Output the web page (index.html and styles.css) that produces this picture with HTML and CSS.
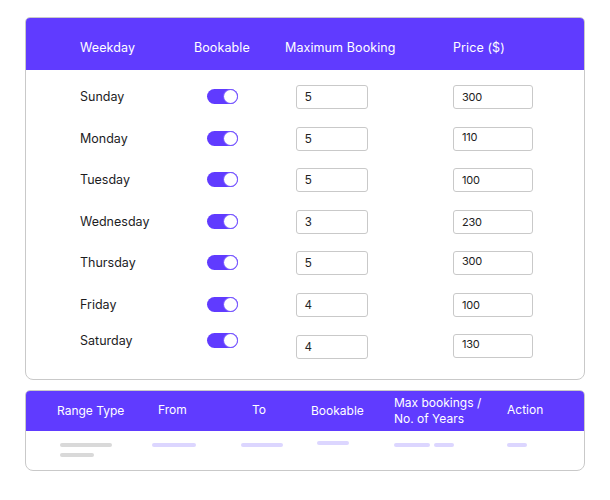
FILE: index.html
```html
<!DOCTYPE html>
<html>
<head>
<meta charset="utf-8">
<link rel="stylesheet" href="styles.css">
</head>
<body>
<div class="page">
  <section class="card week">
    <div class="week-head">
      <div class="c1">Weekday</div>
      <div class="c2">Bookable</div>
      <div class="c3">Maximum Booking</div>
      <div class="c4">Price ($)</div>
    </div>
    <div class="week-body">
      <div class="row"><div class="c1 day">Sunday</div><div class="c2"><span class="toggle"></span></div><div class="c3"><span class="inp max">5</span></div><div class="c4"><span class="inp price">300</span></div></div>
      <div class="row"><div class="c1 day">Monday</div><div class="c2"><span class="toggle"></span></div><div class="c3"><span class="inp max">5</span></div><div class="c4"><span class="inp price top">110</span></div></div>
      <div class="row"><div class="c1 day">Tuesday</div><div class="c2"><span class="toggle"></span></div><div class="c3"><span class="inp max">5</span></div><div class="c4"><span class="inp price">100</span></div></div>
      <div class="row"><div class="c1 day">Wednesday</div><div class="c2"><span class="toggle"></span></div><div class="c3"><span class="inp max">3</span></div><div class="c4"><span class="inp price">230</span></div></div>
      <div class="row"><div class="c1 day">Thursday</div><div class="c2"><span class="toggle"></span></div><div class="c3"><span class="inp max">5</span></div><div class="c4"><span class="inp price top">300</span></div></div>
      <div class="row"><div class="c1 day">Friday</div><div class="c2"><span class="toggle"></span></div><div class="c3"><span class="inp max">4</span></div><div class="c4"><span class="inp price">100</span></div></div>
      <div class="row last"><div class="c1 day up">Saturday</div><div class="c2 up"><span class="toggle"></span></div><div class="c3"><span class="inp max">4</span></div><div class="c4"><span class="inp price top">130</span></div></div>
    </div>
  </section>

  <section class="card range">
    <div class="range-head">
      <div class="r1">Range Type</div>
      <div class="r2">From</div>
      <div class="r3">To</div>
      <div class="r4">Bookable</div>
      <div class="r5">Max bookings /<br>No. of Years</div>
      <div class="r6">Action</div>
    </div>
    <div class="range-body">
      <div class="r1 stack"><span class="bar gray w52"></span><span class="bar gray w34"></span></div>
      <div class="r2"><span class="bar lav w44"></span></div>
      <div class="r3"><span class="bar lav w42"></span></div>
      <div class="r4"><span class="bar lav w32 hi"></span></div>
      <div class="r5 pair"><span class="bar lav w36"></span><span class="bar lav w20"></span></div>
      <div class="r6"><span class="bar lav w20"></span></div>
    </div>
  </section>
</div>
</body>
</html>
```

FILE: styles.css
```css
* { box-sizing: border-box; }
html, body { margin: 0; padding: 0; background: #fff; }
body { font-family: "Inter", "DejaVu Sans", sans-serif; color: #1d1d1f; }

.page {
  padding: 17px 0 0 25px;
  width: 610px;
  display: flex;
  flex-direction: column;
  gap: 10px;
}

.card {
  width: 560px;
  border: 1px solid #c9c9c9;
  border-radius: 5px 5px 8px 8px;
  overflow: hidden;
  background: #fff;
}

/* ---------- weekly table ---------- */
.week-head, .row {
  display: grid;
  grid-template-columns: 114px 91px 168px 1fr;
  padding-left: 54px;
}
.week-head {
  background: #603bff;
  color: #fff;
  height: 53px;
  margin: -1px -1px 0 -1px;
  padding-left: 55px;
  padding-top: 23px;
  font-size: 12.5px;
  line-height: 16px;
  letter-spacing: 0.1px;
}
.week-body {
  padding: 15px 0 21px 0;
  display: flex;
  flex-direction: column;
  gap: 17.5px;
}
.row { height: 24px; align-items: center; }
.day { font-size: 12.5px; line-height: 16px; color: #1d1d1f; }
.up { margin-top: -11px; }
.c2.up { margin-top: -12px; }

.toggle {
  display: block;
  margin-left: 13px;
  margin-top: -1px;
  width: 31px;
  height: 15px;
  border-radius: 8px;
  background: #603bff;
  position: relative;
}
.toggle::after {
  content: "";
  position: absolute;
  right: 1px;
  top: 1px;
  width: 13px;
  height: 13px;
  border-radius: 50%;
  background: #fff;
  box-shadow: 0 0 0 1px #7b5cff;
}

.inp {
  display: flex;
  align-items: center;
  height: 24px;
  border: 1px solid #c9c9c9;
  border-radius: 3px;
  padding-left: 8px;
  font-size: 12px;
  color: #222;
}
.inp.max { width: 72px; margin-left: 11px; font-family: "Liberation Sans", Arial, sans-serif; }
.inp.price { width: 80px; font-family: "Inter", sans-serif; font-size: 11px; letter-spacing: -0.2px; }
.inp.top { align-items: flex-start; padding-top: 2px; }
.row.last .c3 { margin-top: 1px; }
.row.last .c4 { margin-top: -1px; }

/* ---------- range table ---------- */
.range { height: 81px; }
.range-head, .range-body {
  display: grid;
  grid-template-columns: 101px 94px 59px 83px 113px 1fr;
}
.range-head {
  background: #603bff;
  color: #fff;
  height: 41px;
  margin: -1px -1px 0 -1px;
  padding-left: 32px;
  align-items: center;
  font-size: 12px;
  line-height: 16px;
}
.range-head .r2, .range-head .r3, .range-head .r6 { margin-top: -2px; }
.range-body { padding-top: 12px; align-items: start; padding-left: 31px; }
.range-body .r1 { margin-left: 3px; }
.range-body .r2 { margin-left: -6px; }
.range-body .r3 { margin-left: -11px; }
.range-body .r4 { margin-left: 6px; }
.stack { display: flex; flex-direction: column; gap: 6px; }
.pair { display: flex; gap: 4px; }
.bar { display: block; height: 4px; border-radius: 2px; }
.bar.gray { background: #d9d9d9; }
.bar.lav { background: #dcd6ff; }
.bar.hi { margin-top: -2px; }
.w52 { width: 52px; } .w34 { width: 34px; } .w44 { width: 44px; } .w42 { width: 42px; }
.w32 { width: 32px; } .w36 { width: 36px; } .w20 { width: 20px; }
```
